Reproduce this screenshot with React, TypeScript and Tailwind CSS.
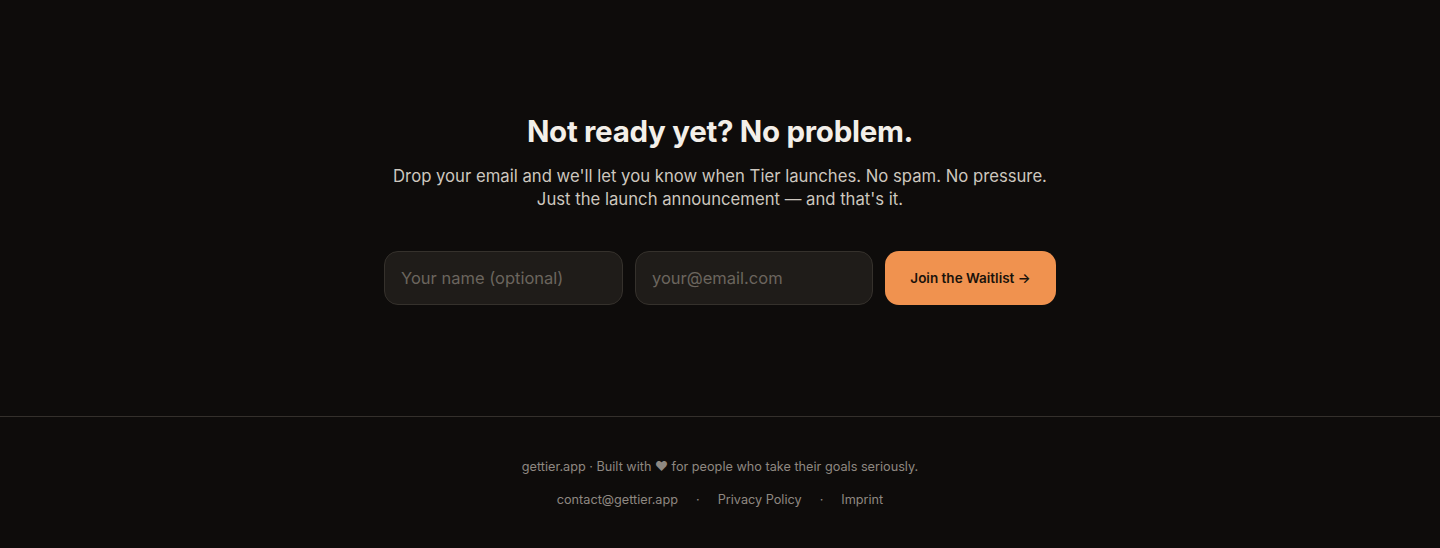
export default function App() {
  return (
    <div
      className="flex min-h-[548px] flex-col bg-[#0e0c0b] text-[#f3efe9]"
      style={{ fontFamily: "Inter, 'Noto Sans', sans-serif" }}
    >
      <section className="flex h-[416px] flex-col items-center pt-[112px]">
        <h2 className="text-[29.5px] font-bold leading-[38px] tracking-[-0.01em]">
          Not ready yet? No problem.
        </h2>
        <p className="mt-[15px] text-center text-[16.7px] leading-[23px] text-[#cdc7bf]">
          Drop your email and we'll let you know when Tier launches. No spam. No pressure.
          <br />
          Just the launch announcement — and that's it.
        </p>
        <form className="mt-[40px] flex gap-3" onSubmit={(e) => e.preventDefault()}>
          <input
            type="text"
            placeholder="Your name (optional)"
            className="h-[54px] w-[239px] rounded-[14px] border border-[#35312c] bg-[#1f1c19] px-4 text-[16.5px] text-[#f3efe9] outline-none placeholder:text-[#6b655e]"
          />
          <input
            type="email"
            placeholder="your@email.com"
            className="h-[54px] w-[238px] rounded-[14px] border border-[#35312c] bg-[#1f1c19] px-4 text-[16.5px] text-[#f3efe9] outline-none placeholder:text-[#6b655e]"
          />
          <button
            type="submit"
            className="h-[54px] w-[171px] rounded-[14px] bg-[#f0924f] text-[13.5px] font-semibold text-[#1a120b]"
          >
            Join the Waitlist →
          </button>
        </form>
      </section>
      <footer className="flex flex-1 flex-col items-center border-t border-[#34302c] pt-[40px] pb-[40px] text-[12.7px] text-[#8e8881]">
        <p>gettier.app · Built with ❤ for people who take their goals seriously.</p>
        <div className="mt-[14px] flex items-center gap-[18px]">
          <a href="#">contact@gettier.app</a>
          <span>·</span>
          <a href="#">Privacy Policy</a>
          <span>·</span>
          <a href="#">Imprint</a>
        </div>
      </footer>
    </div>
  );
}
